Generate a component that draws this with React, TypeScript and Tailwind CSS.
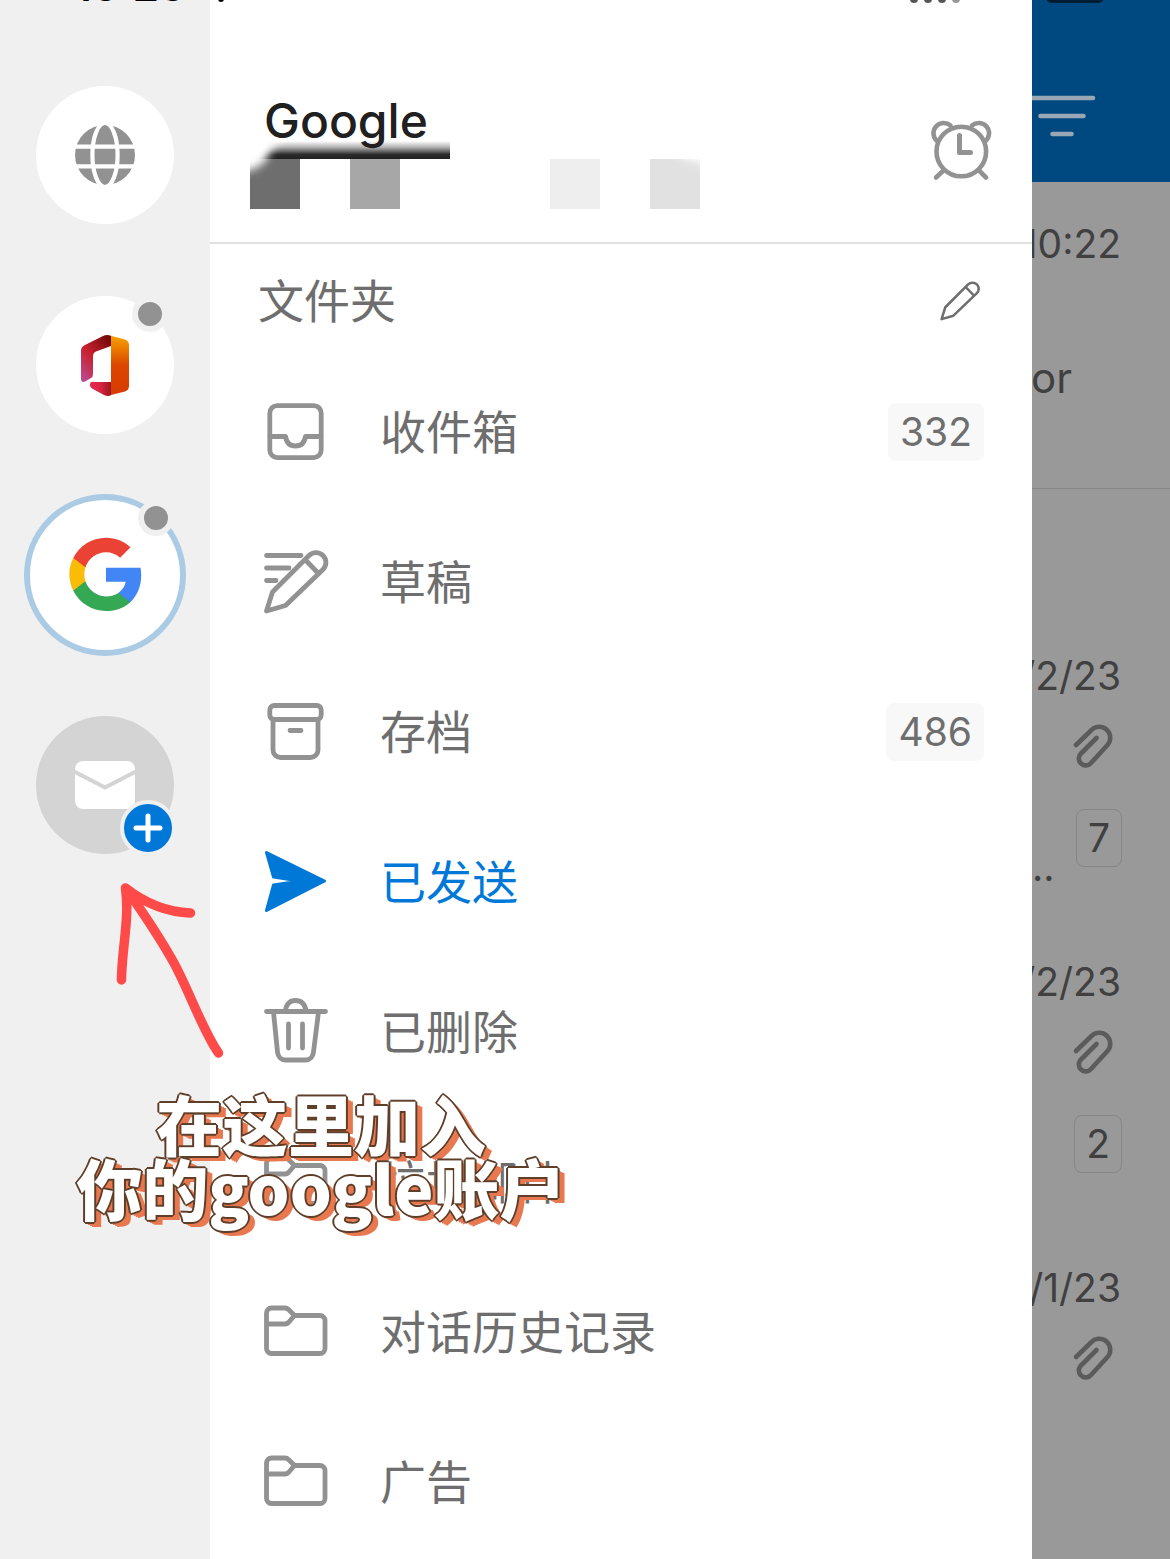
import type { ReactNode } from 'react';

const FOLDERS = [
  { name: '收件箱', icon: 'inbox', count: 332 },
  { name: '草稿', icon: 'drafts' },
  { name: '存档', icon: 'archive', count: 486 },
  { name: '已发送', icon: 'sent', active: true },
  { name: '已删除', icon: 'trash' },
  { name: '垃圾邮件', icon: 'folder' },
  { name: '对话历史记录', icon: 'folder' },
  { name: '广告', icon: 'folder' },
];

const MESSAGES = [
  { id: 1, date: '/2/23', preview: '..', count: 7 },
  { id: 2, date: '/2/23', preview: '', count: 2 },
  { id: 3, date: '/1/23', preview: '', count: 0 },
];

const PENCIL = 'M2.5 61 8.5 42 45 5.5a9.6 9.6 0 0 1 14 14L21.5 55.5ZM41.5 10 54 23';

const ICONS: Record<string, ReactNode> = {
  inbox: (
    <>
      <rect x="5.8" y="5.6" width="51.4" height="52" rx="7.5" />
      <path d="M6 36.500H21.500C22.500 42.500 26 46 31.500 46s9-3.500 10-9.500H57" />
    </>
  ),
  drafts: (
    <>
      <path d={PENCIL} />
      <path d="M2.5 5.500H37M2.5 18H25M2.5 30.500H12" />
    </>
  ),
  archive: (
    <>
      <rect x="5.8" y="5.5" width="51.4" height="14" rx="4.5" />
      <path d="M9 20v30a7.5 7.5 0 0 0 7.5 7.5h30A7.5 7.5 0 0 0 54 50V20M26 30.500h11" />
    </>
  ),
  sent: (
    <path
      d="M2.500 2.500 60.500 31 2.500 60.500l7-25.500 26-4-26-4Z"
      fill="currentColor"
      strokeWidth="3"
    />
  ),
  trash: (
    <path d="M2.500 11.500h59M21.500 11C22 4 26 .5 31.500.5S41 4 42 11M9.500 12 13.500 52c.5 5 3.500 8 8 8h20c4.500 0 7.500-3 8-8L54.500 12M24.500 24v24M38.500 24v24" />
  ),
  folder: (
    <path d="M2.500 24V13a5 5 0 0 1 5-5h13.500c1.500 0 2.500.5 3.500 1.500l6 6H56a5 5 0 0 1 5 5v28a5 5 0 0 1-5 5H7.500a5 5 0 0 1-5-5V24H21c1.500 0 2.500-.5 3.500-1.500l6-7" />
  ),
};

function GlobeIcon() {
  return (
    <svg className="h-16 w-16" viewBox="0 0 64 64" fill="none" stroke="#fff" strokeWidth="4.2">
      <circle cx="32" cy="32" r="30" fill="#929292" stroke="none" />
      <ellipse cx="32" cy="32" rx="12.6" ry="32" />
      <path d="M0 23.700h64M0 43.300h64" />
    </svg>
  );
}

function OfficeIcon() {
  return (
    <svg className="h-[62px] w-12" viewBox="0 0 48 62">
      <defs>
        <linearGradient id="office-right" x1="0" y1="0" x2="0" y2="1">
          <stop offset="0" stopColor="#f7a500" />
          <stop offset=".5" stopColor="#dc4500" />
          <stop offset="1" stopColor="#d83b01" />
        </linearGradient>
        <linearGradient id="office-left" x1=".8" y1="0" x2="0" y2="1">
          <stop offset="0" stopColor="#760b0c" />
          <stop offset=".5" stopColor="#c8202f" />
          <stop offset="1" stopColor="#b9509c" />
        </linearGradient>
        <linearGradient id="office-bottom" x1="0" y1="0" x2="1" y2="0">
          <stop offset="0" stopColor="#e8294f" />
          <stop offset=".5" stopColor="#d9253f" />
          <stop offset="1" stopColor="#9c1522" />
        </linearGradient>
      </defs>
      <path d="M27 1 44 5.500q4 1.500 4 5.500v41q0 4-4 5.500L26 62l4-5V9Z" fill="url(#office-right)" />
      <path
        d="M30 12V2Q26 0 22 2L3 11.500Q0 13 0 17v27.500q0 4.500 4 3l6-3.500q2-1 2-4V22q0-3 3-4.500Z"
        fill="url(#office-left)"
      />
      <path d="M30 48v13q-3 2-7 0L11 54.500Q8.500 53 9 50t4-2Z" fill="url(#office-bottom)" />
    </svg>
  );
}

function GoogleIcon() {
  return (
    <svg className="h-20 w-20" viewBox="-.3 .2 24 24">
      <path fill="#4285f4" d="M22.560 12.250c0-.78-.07-1.530-.2-2.250H12v4.260h5.920c-.26 1.370-1.040 2.530-2.210 3.310v2.770h3.570c2.080-1.920 3.280-4.740 3.280-8.090z" />
      <path fill="#34a853" d="M12 23c2.970 0 5.460-.98 7.280-2.660l-3.570-2.770c-.98.66-2.230 1.060-3.710 1.060-2.860 0-5.290-1.930-6.160-4.530H2.180v2.840C3.990 20.530 7.700 23 12 23z" />
      <path fill="#fbbc05" d="M5.840 14.090c-.22-.66-.35-1.360-.35-2.090s.13-1.430.35-2.090V7.070H2.180C1.430 8.550 1 10.220 1 12s.43 3.450 1.180 4.930l2.850-2.220.81-.62z" />
      <path fill="#ea4335" d="M12 5.380c1.620 0 3.060.56 4.210 1.640l3.150-3.150C17.450 2.090 14.970 1 12 1 7.700 1 3.990 3.470 2.180 7.070l3.660 2.840c.87-2.600 3.300-4.530 6.160-4.530z" />
    </svg>
  );
}

function MailIcon() {
  return (
    <svg className="h-12 w-[60px]" viewBox="0 0 60 48">
      <rect width="60" height="48" rx="8" fill="#fff" />
      <path d="m-1 10.500 31 16 31-16" fill="none" stroke="#d4d4d4" strokeWidth="4" />
    </svg>
  );
}

function AlarmIcon() {
  return (
    <svg className="h-16 w-16" viewBox="0 0 64 64" fill="none" stroke="currentColor" strokeWidth="4.6" strokeLinecap="round" strokeLinejoin="round">
      <circle cx="32.3" cy="32.5" r="24.8" />
      <path d="M30.500 16.500v17h11" strokeWidth="5" />
      <path d="M8 22A10.200 10.200 0 0 1 21.500 6.500M56.500 22A10.200 10.200 0 0 0 43 6.500M14 52l-7 6.500M50.500 52l6.500 6.500" />
    </svg>
  );
}

function ClipIcon() {
  return (
    <svg className="h-[46px] w-[46px]" viewBox="0 0 46 46" fill="none" stroke="#5b5b5b" strokeWidth="4.6" strokeLinecap="round" strokeLinejoin="round">
      <path d="M6 22 21 7.500a10.900 10.900 0 0 1 16.500 14.500L21 40A6.900 6.900 0 0 1 10.500 31l16-16" />
    </svg>
  );
}

function Dot() {
  return (
    <span className="absolute top-0 right-1.5 h-9 w-9 rounded-full border-[6px] border-[#f0f0f0] bg-[#929292]" />
  );
}

function AccountRail() {
  return (
    <nav aria-label="Accounts" className="flex w-[210px] shrink-0 flex-col items-center bg-[#f0f0f0] pt-[50px]">
      <div className="flex h-[210px] items-center">
        <button aria-label="All accounts" className="flex h-[138px] w-[138px] items-center justify-center rounded-full bg-white">
          <GlobeIcon />
        </button>
      </div>
      <div className="flex h-[210px] items-center">
        <button aria-label="Office" className="relative flex h-[138px] w-[138px] items-center justify-center rounded-full bg-white">
          <OfficeIcon />
          <Dot />
        </button>
      </div>
      <div className="flex h-[210px] items-center">
        <button aria-label="Google" className="relative flex h-[162px] w-[162px] items-center justify-center rounded-full border-[6px] border-[#abcbe5] bg-white">
          <GoogleIcon />
          <Dot />
        </button>
      </div>
      <div className="flex h-[210px] items-center">
        <button aria-label="Add account" className="relative flex h-[138px] w-[138px] items-center justify-center rounded-full bg-[#d4d4d4]">
          <MailIcon />
          <span className="absolute -right-0.5 -bottom-0.5 flex h-14 w-14 items-center justify-center rounded-full border-4 border-[#f0f0f0] bg-[#0078d7]">
            <svg className="h-8 w-8" viewBox="0 0 32 32" stroke="#fff" strokeWidth="5" strokeLinecap="round">
              <path d="M16 4v24M4 16h24" />
            </svg>
          </span>
        </button>
      </div>
    </nav>
  );
}

function RedactedAddress() {
  return (
    <svg className="h-[70px] w-[450px]" viewBox="0 0 450 70">
      <defs>
        <linearGradient id="shade" x1="0" y1="0" x2="0" y2="1">
          <stop offset="0" stopColor="#202020" stopOpacity="0" />
          <stop offset=".35" stopColor="#202020" stopOpacity=".35" />
          <stop offset=".75" stopColor="#202020" stopOpacity=".95" />
          <stop offset="1" stopColor="#202020" />
        </linearGradient>
        <filter id="soften" x="-50%" y="-50%" width="200%" height="200%">
          <feGaussianBlur stdDeviation="4" />
        </filter>
      </defs>
      <rect y="1" width="200" height="18" fill="url(#shade)" />
      <rect y="19" width="50" height="50" fill="#6e6e6e" />
      <rect x="100" y="19" width="50" height="50" fill="#a7a7a7" />
      <rect x="300" y="19" width="50" height="50" fill="#eee" />
      <rect x="400" y="19" width="50" height="50" fill="#e1e1e1" />
      <path d="M-40-30H60Q24 0 17 18 10 34-40 36Z" fill="#fff" filter="url(#soften)" />
      <path d="M415 10h55v18Q440 22 415 10Z" fill="#fff" filter="url(#soften)" />
    </svg>
  );
}

function FolderPanel() {
  return (
    <main className="min-w-0 flex-1 bg-white">
      <header className="flex h-[244px] items-start justify-between border-b-2 border-[#e1e1e1] pr-[39px] pl-10">
        <div className="pt-[91px]">
          <h1 className="relative z-10 pl-3.5 text-5xl leading-[60px] font-medium text-[#202020]">Google</h1>
          <div className="-mt-[11px]">
            <RedactedAddress />
          </div>
        </div>
        <button aria-label="Do not disturb" className="mt-[119px] text-[#929292]">
          <AlarmIcon />
        </button>
      </header>

      <div className="flex h-[113px] items-center justify-between pr-[52px] pl-12">
        <h2 className="text-[46px] leading-[60px] text-[#6e6e6e]">文件夹</h2>
        <button aria-label="Edit folders" className="text-[#6e6e6e]">
          <svg className="h-10 w-10" viewBox="0 0 64 64" fill="none" stroke="currentColor" strokeWidth="4" strokeLinejoin="round">
            <path d={PENCIL} />
          </svg>
        </button>
      </div>

      <ul>
        {FOLDERS.map(folder => (
          <li key={folder.name}>
            <button
              className={`flex h-[150px] w-full items-center pr-12 pl-[54px] text-left ${
                folder.active ? 'text-[#0078d7]' : 'text-[#929292]'
              }`}
            >
              <svg
                className="h-16 w-16 shrink-0 overflow-visible"
                viewBox="0 0 64 64"
                fill="none"
                stroke="currentColor"
                strokeWidth="4.8"
                strokeLinecap="round"
                strokeLinejoin="round"
              >
                {ICONS[folder.icon]}
              </svg>
              <span className={`ml-[52px] flex-1 text-[46px] leading-[60px] ${folder.active ? '' : 'text-[#6e6e6e]'}`}>
                {folder.name}
              </span>
              {folder.count && (
                <span className="rounded-lg bg-[#f8f8f8] px-3 text-[39px] leading-[58px] text-[#6e6e6e]">
                  {folder.count}
                </span>
              )}
            </button>
          </li>
        ))}
      </ul>
    </main>
  );
}

function MessageStrip() {
  return (
    <aside className="w-[138px] shrink-0 overflow-hidden bg-[#999] text-[39px] leading-[48px] text-[#404040]">
      <div className="flex h-[182px] bg-[#004880] pt-[91px]">
        <svg className="-ml-1 h-12 w-[68px]" viewBox="0 0 68 48" stroke="#99a6b3" strokeWidth="4.6" strokeLinecap="round">
          <path d="M3 7h62M12.500 25h43M24.500 43h19" />
        </svg>
      </div>

      <article className="h-[307px] border-b border-[#868686] pt-[38px]">
        <p className="flex justify-end pr-[49px]">10:22</p>
        <p className="mt-[86px] flex justify-end pr-[98px] text-[42px]">or</p>
      </article>

      <div className="pt-[125px]">
        {MESSAGES.map(message => (
          <article key={message.id} className="h-[306px] pt-[38px]">
            <p className="flex justify-end pr-[49px]">{message.date}</p>
            <div className="mt-[23px] flex justify-end pr-[54px]">
              <ClipIcon />
            </div>
            {message.count > 0 && (
              <div className="mt-10 flex h-[82px] items-start justify-between pr-12">
                <span className="self-end">{message.preview}</span>
                <span className="rounded-lg border border-[#868686] px-[11px] leading-[56px]">{message.count}</span>
              </div>
            )}
          </article>
        ))}
      </div>
    </aside>
  );
}

// Hand-drawn pointer and caption laid over the screen
function Annotation() {
  return (
    <>
      <svg className="pointer-events-none absolute top-[870px] left-[100px] h-[200px] w-[140px]" viewBox="0 0 140 200" fill="none" stroke="#ff4a4a" strokeWidth="9.500" strokeLinecap="round" strokeLinejoin="round">
        <path d="M25.500 18c3 22 0 42-2 62-1 10-2 20-2 30M25.500 18c18 14 39 24 65 25M25.500 18C44 44 60 68 74 93 90 123 104 163 118.500 183" />
      </svg>
      <p className="pointer-events-none absolute top-[1090px] left-[76px] w-[490px] text-center font-['Noto_Sans_CJK_SC',sans-serif] text-[66px] leading-[64px] font-black whitespace-nowrap text-white [paint-order:stroke_fill] [-webkit-text-stroke:3px_#fff] [text-shadow:1px_1px_0_#5f3f2a,-1px_1px_0_#5f3f2a,1px_-1px_0_#5f3f2a,-1px_-1px_0_#5f3f2a,2px_0_0_#5f3f2a,-2px_0_0_#5f3f2a,0_2px_0_#5f3f2a,0_-2px_0_#5f3f2a,3px_3px_0_#e8784f,5px_4px_0_#e8784f,7px_5px_0_#e8784f]">
        在这里加入
        <br />
        你的google账户
      </p>
    </>
  );
}

function StatusBar() {
  return (
    <div className="pointer-events-none absolute inset-x-0 top-0 flex h-[3px] items-end justify-between overflow-hidden pr-[66px] pl-[74px] text-black">
      <span className="flex items-end gap-8 text-[42px] leading-[34px] font-semibold">
        10:28
        <i className="mb-px h-2 w-1.5 rounded-full bg-black" />
      </span>
      <span className="flex items-end gap-[86px]">
        <span className="flex gap-1.5">
          <i className="h-2 w-2 rounded-full bg-[#555]" />
          <i className="h-2 w-2 rounded-full bg-[#555]" />
          <i className="h-2 w-2 rounded-full bg-[#555]" />
          <i className="h-2 w-2 rounded-full bg-[#999]" />
        </span>
        <i className="h-6 w-[58px] rounded-md bg-[#001d33]" />
      </span>
    </div>
  );
}

export default function App() {
  return (
    <div className="relative flex min-h-screen overflow-hidden bg-white font-['Inter','Noto_Sans_CJK_SC',sans-serif]">
      <AccountRail />
      <FolderPanel />
      <MessageStrip />
      <StatusBar />
      <Annotation />
    </div>
  );
}
